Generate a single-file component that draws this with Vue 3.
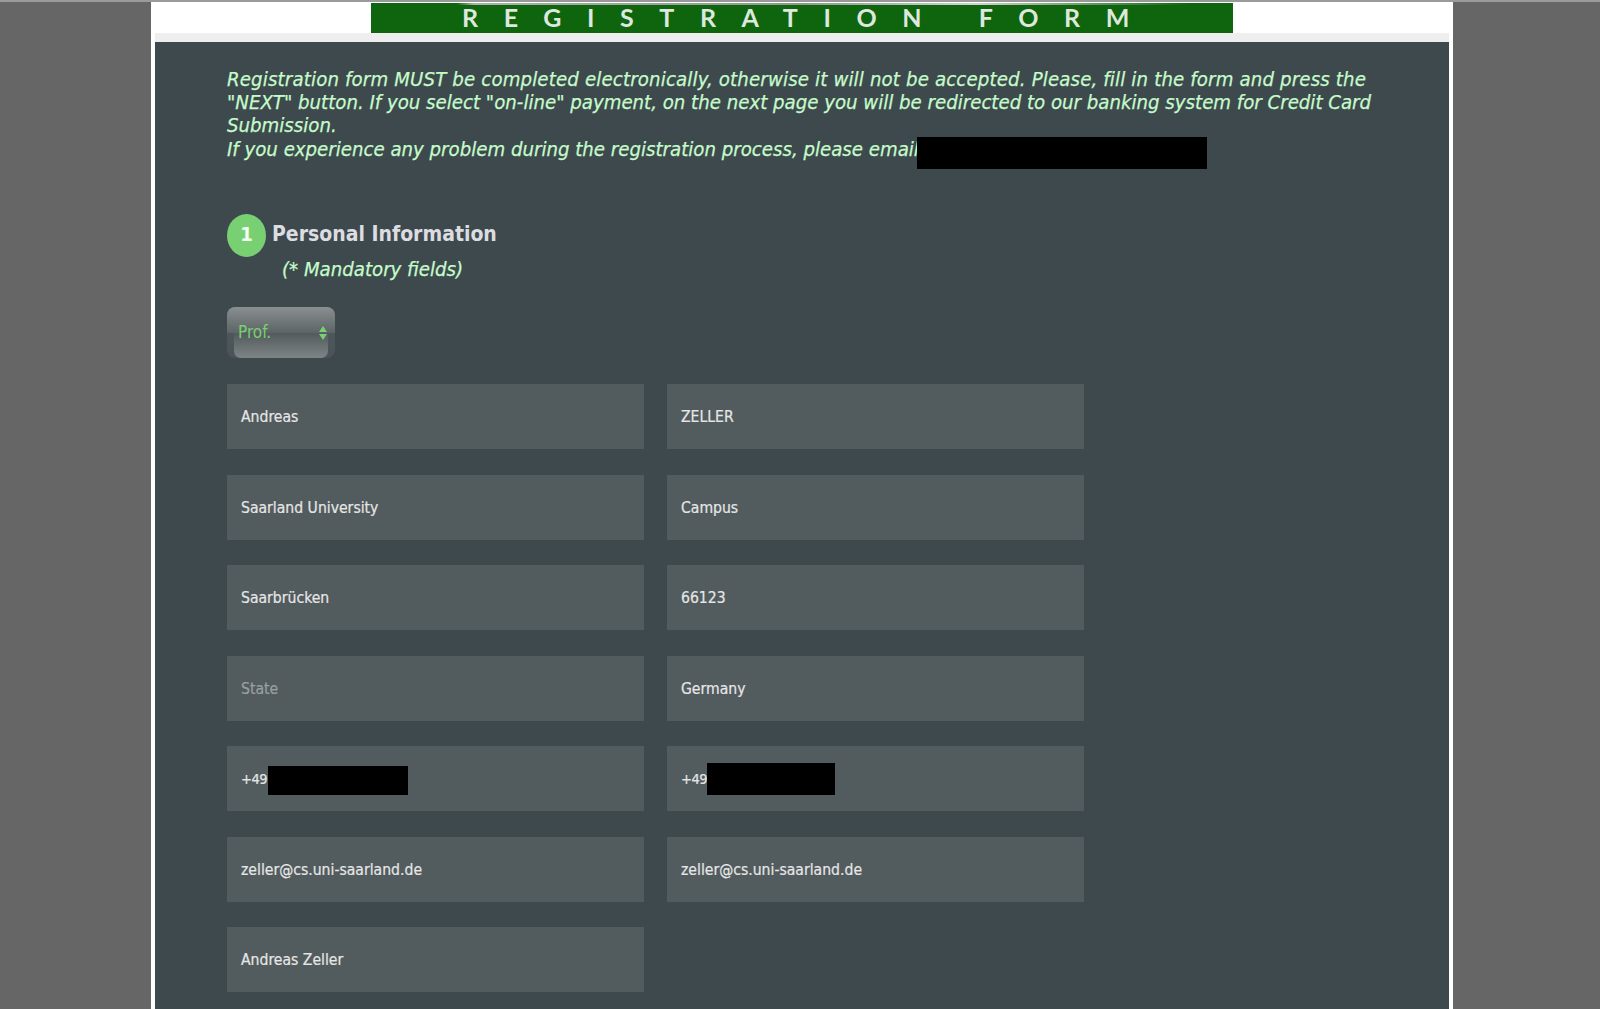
<script setup>
const rows = [
  [{ v: 'Andreas' }, { v: 'ZELLER' }],
  [{ v: 'Saarland University' }, { v: 'Campus' }],
  [{ v: 'Saarbrücken' }, { v: '66123' }],
  [{ v: 'State', ph: true }, { v: 'Germany' }],
  [{ v: '+49', mask: 'a' }, { v: '+49', mask: 'b' }],
  [{ v: 'zeller@cs.uni-saarland.de' }, { v: 'zeller@cs.uni-saarland.de' }],
  [{ v: 'Andreas Zeller' }],
]
</script>

<template>
  <div class="page">
    <div class="sheet">
      <header class="head">
        <div class="banner">REGISTRATION FORM</div>
      </header>
      <main class="panel">
        <p class="intro">
          <span class="line first">Registration form MUST be completed electronically, otherwise it will not be accepted. Please, fill in the form and press the</span>
          <span class="line">"NEXT" button. If you select "on-line" payment, on the next page you will be redirected to our banking system for Credit Card</span>
          <span class="line">Submission.</span>
          <span class="line last">If you experience any problem during the registration process, please email<span class="mask-mail"></span></span>
        </p>
        <div class="title">
          <span class="step">1</span>
          <h2>Personal Information</h2>
        </div>
        <p class="mandatory">(* Mandatory fields)</p>
        <div class="select">
          <span class="select-inner"></span>
          <span class="select-label">Prof.</span>
          <svg class="arrows" width="8" height="14" viewBox="0 0 8 14"><path d="M4 0 8 6H0zM0 8h8l-4 6z" fill="#79d070"/></svg>
        </div>
        <div class="grid">
          <div v-for="(row, i) in rows" :key="i" class="row">
            <div v-for="(f, j) in row" :key="j" class="field" :class="{ ph: f.ph }">
              <span :class="{ cc: f.mask }">{{ f.v }}</span>
              <span v-if="f.mask" class="mask" :class="f.mask"></span>
            </div>
          </div>
        </div>
      </main>
    </div>
  </div>
</template>

<style>
html, body { margin: 0; height: 100%; overflow: hidden; background: #666; }
</style>

<style scoped>
.page {
  height: 1009px;
  overflow: hidden;
  background: #666;
  border-top: 2px solid #9a9a9a;
  box-sizing: border-box;
  padding-left: 151px;
  font-family: "DejaVu Sans", sans-serif;
  font-stretch: condensed;
}
.sheet {
  width: 1302px;
  height: 1007px;
  box-sizing: border-box;
  padding: 0 4px;
  background: #fff;
  display: flex;
  flex-direction: column;
  overflow: hidden;
}
.head {
  height: 31px;
  flex: none;
  display: flex;
  justify-content: center;
  background: #fff;
}
.banner {
  width: 862px;
  height: 30px;
  margin-top: 1px;
  padding-left: 13px;
  background: #0e650e;
  border-top: 2px solid;
  border-image: linear-gradient(90deg, #0e650e 0, #0e650e 10%, #a9b3a9 12%, #8f9a8f 50%, #d0d4d0 70%, #0e650e 95%) 1;
  box-sizing: border-box;
  color: #dfe8df;
  font-family: Lato, sans-serif;
  font-stretch: normal;
  font-weight: 700;
  font-size: 25px;
  line-height: 25px;
  letter-spacing: 25.6px;
  text-align: center;
  white-space: pre;
}
.panel {
  flex: 1;
  border-top: 9px solid #eee;
  background: #3e494e;
  padding: 26px 0 0 72px;
}
.intro {
  margin: 0;
  font-style: italic;
  font-size: 20.2px;
  line-height: 23px;
  color: #c5fbca;
  white-space: nowrap;
  -webkit-text-stroke: 0.25px #c5fbca;
}
.line { display: block; }
.first { letter-spacing: 0.15px; }
.last { padding-top: 1px; }
.mask-mail {
  display: inline-block;
  width: 290px;
  height: 32px;
  margin: -1px 0 0 -2px;
  background: #000;
  vertical-align: top;
}
.title {
  display: flex;
  align-items: flex-start;
  margin-top: 45px;
}
.step {
  width: 39px;
  height: 43px;
  border-radius: 50%;
  background: #79d073;
  color: #f4fff2;
  font-weight: 700;
  font-size: 20px;
  line-height: 41px;
  text-align: center;
}
h2 {
  margin: 4px 0 -1px 6px;
  font-size: 21px;
  line-height: 32px;
  font-weight: 700;
  color: #dcdde0;
}
.mandatory {
  margin: -1px 0 0 55px;
  font-style: italic;
  font-size: 20.2px;
  line-height: 26px;
  color: #c5fbca;
  -webkit-text-stroke: 0.25px #c5fbca;
}
.select {
  position: relative;
  width: 108px;
  height: 51px;
  margin-top: 25px;
  border-radius: 8px;
  background: linear-gradient(#8a8f90 0, #5c6466 51%, #4d565a 51%, #4a5357 100%);
}
.select-inner {
  position: absolute;
  left: 7px;
  right: 7px;
  top: 26px;
  bottom: 0;
  border-radius: 0 0 7px 7px;
  background: linear-gradient(#525a5d, #7f8586);
}
.select-label {
  position: absolute;
  left: 11px;
  top: 15px;
  font-size: 17px;
  line-height: 20px;
  color: #79d070;
}
.arrows {
  position: absolute;
  left: 92px;
  top: 19px;
}
.grid {
  margin-top: 26px;
  display: flex;
  flex-direction: column;
  gap: 25.5px;
}
.row {
  display: flex;
  gap: 23px;
}
.field {
  width: 417px;
  height: 65px;
  background: #525c5e;
  padding: 1px 0 0 14px;
  box-sizing: border-box;
  display: flex;
  align-items: center;
  font-size: 15.6px;
  color: #e6e6e6;
  -webkit-text-stroke: 0.2px currentColor;
}
.ph { color: #9aa0a0; }
.cc { font-size: 14.5px; letter-spacing: -0.5px; }
.mask { background: #000; display: block; }
.mask.a { width: 140px; height: 29px; margin: 3px 0 0 1px; }
.mask.b { width: 128px; height: 32px; margin: -1px 0 0 0; }
</style>
